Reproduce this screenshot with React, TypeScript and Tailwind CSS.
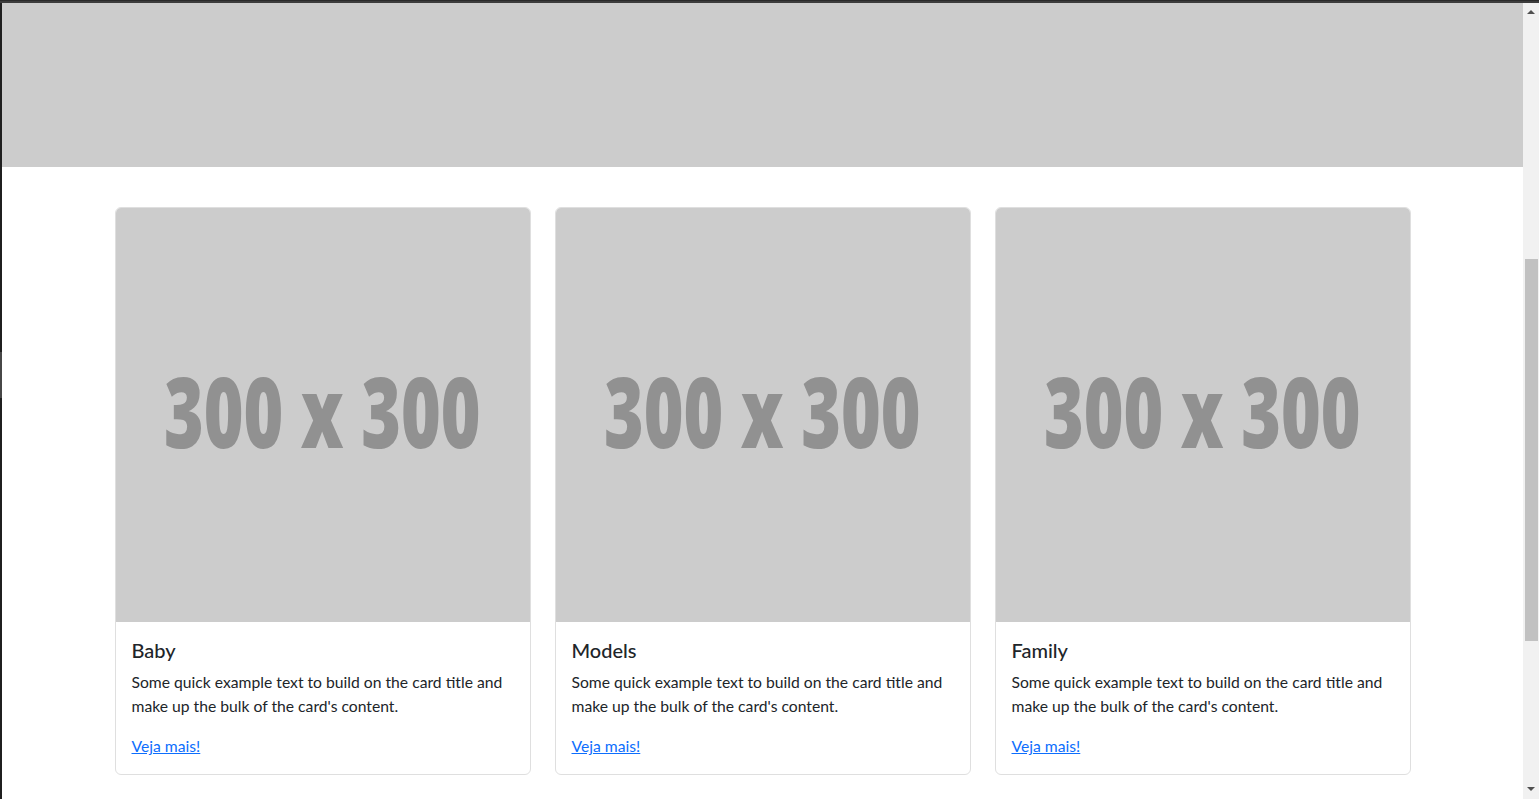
import React from 'react';

type CardItem = {
  title: string;
};

const cards: CardItem[] = [{ title: 'Baby' }, { title: 'Models' }, { title: 'Family' }];

// imagem placeholder 300x300 (sem rede, desenhada com texto)
const Placeholder: React.FC = () => (
  <div className="h-[414px] w-full bg-[#cccccc] rounded-t-[5px] flex items-center justify-center overflow-hidden">
    <span className="font-['Open_Sans',sans-serif] font-extrabold text-[97px] leading-none text-[#919191] scale-x-[0.7] whitespace-nowrap mb-[9px]">
      300 x 300
    </span>
  </div>
);

const Card: React.FC<{ item: CardItem }> = ({ item }) => (
  <div className="w-[416px] border border-[#dfdfdf] rounded-[6px] bg-white flex flex-col">
    <Placeholder />
    <div className="p-4 text-[#212529]">
      <h5 className="text-[20px] leading-[24px] font-medium mb-2">{item.title}</h5>
      <p className="text-[15.7px] leading-[24px] mb-4">
        Some quick example text to build on the card title and make up the bulk of the card's content.
      </p>
      <a href="#" className="text-[15.7px] leading-[24px] text-[#0d6efd] underline">
        Veja mais!
      </a>
    </div>
  </div>
);

// barra de rolagem desenhada (faz parte da captura)
const FakeScrollbar: React.FC = () => (
  <div className="w-[16px] bg-[#f1f1f1] flex flex-col items-center">
    <div className="h-[17px] w-full flex items-center justify-center pt-[1px]">
      <div className="w-0 h-0 border-l-[4px] border-r-[4px] border-b-[4px] border-l-transparent border-r-transparent border-b-[#505050]" />
    </div>
    <div className="h-[239px]" />
    <div className="w-[13px] h-[382px] bg-[#c1c1c1] ml-[2px] mr-[1px] self-start" />
    <div className="flex-1" />
    <div className="h-[17px] w-full flex items-center justify-center pb-[3px]">
      <div className="w-0 h-0 border-l-[4px] border-r-[4px] border-t-[4px] border-l-transparent border-r-transparent border-t-[#505050]" />
    </div>
  </div>
);

const App: React.FC = () => {
  return (
    <div className="h-[799px] w-full overflow-hidden bg-[#2b2b2b] flex flex-col font-['Lato',sans-serif]">
      <div className="h-[1px] bg-[#2a2a2a]" />
      <div className="h-[2px] bg-[#3c3c3c]" />
      <div className="flex flex-1 min-h-0">
        {/* borda esquerda da janela */}
        <div className="w-[2px] flex flex-col">
          <div className="h-[349px] bg-[#1f1f1f]" />
          <div className="h-[46px] bg-[#474747]" />
          <div className="flex-1 bg-[#1f1f1f]" />
        </div>

        <main className="flex-1 bg-white overflow-hidden">
          <div className="h-[164px] bg-[#cccccc]" />
          <div className="w-[1320px] mx-auto mt-[40px] grid grid-cols-3">
            {cards.map((item) => (
              <div key={item.title} className="px-3">
                <Card item={item} />
              </div>
            ))}
          </div>
        </main>

        <FakeScrollbar />
      </div>
    </div>
  );
};

export default App;
